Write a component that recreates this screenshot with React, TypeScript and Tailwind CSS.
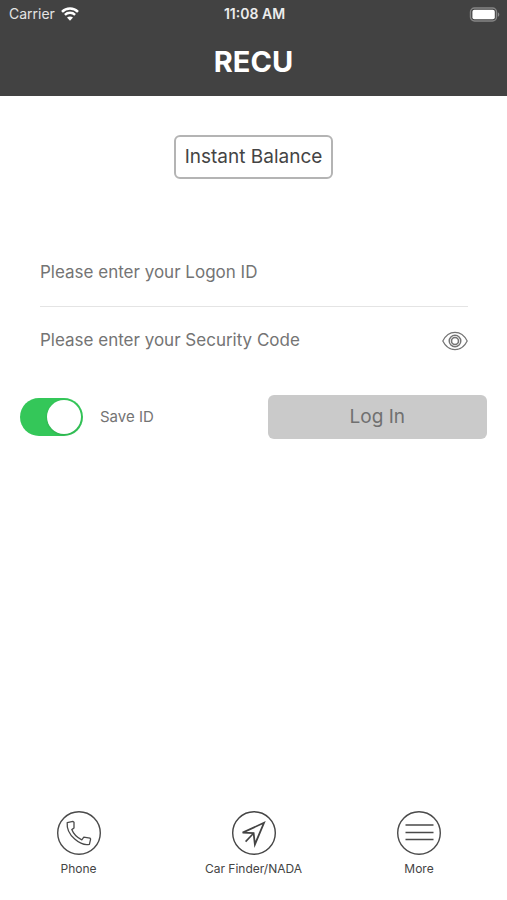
import { useState } from 'react';
import type { ReactNode } from 'react';

function WifiIcon() {
  return (
    <svg viewBox="0 0 18 14" className="h-3.5 w-[18px]" fill="none" stroke="white">
      <path d="M1 4.8C5.4.4 12.6.4 17 4.8" strokeWidth="2.5" />
      <path d="M3.9 7.9c2.8-2.8 7.4-2.8 10.2 0" strokeWidth="2.4" />
      <path d="M9 13.8 6 10.6c1.7-1.6 4.3-1.6 6 0Z" fill="white" stroke="none" />
    </svg>
  );
}

function BatteryIcon() {
  return (
    <svg viewBox="0 0 31 15" className="h-[15px] w-[31px]" fill="none">
      <rect x="1.5" y="1" width="26" height="13" rx="4" stroke="#858585" strokeWidth="1.4" />
      <rect x="3.4" y="2.8" width="22.4" height="9.4" rx="2" fill="white" />
      <path d="M28.9 5.2c1.9.8 1.9 3.8 0 4.6Z" fill="#8b8b8b" />
    </svg>
  );
}

function EyeIcon() {
  return (
    <svg viewBox="0 0 26 20" className="h-5 w-[26px]" fill="none" stroke="#747474">
      <path d="M.8 10C6.6-1.5 19.4-1.5 25.2 10 19.4 21.5 6.6 21.5.8 10Z" strokeWidth="1.2" />
      <circle cx="13" cy="10" r="5.8" strokeWidth="1.4" />
      <circle cx="13" cy="10" r="3.5" strokeWidth="1.6" />
    </svg>
  );
}

function PhoneIcon() {
  return (
    <svg viewBox="0 0 44 44" className="size-11" fill="none" stroke="#4a4a4a">
      <circle cx="22" cy="22" r="21.3" strokeWidth="1.4" />
      <path
        d="M10.2 11.6 16 10.4 17 11.2V17L14.8 18.6C16.4 22.8 20.2 26.8 24.8 28.8L26.8 26.2 33 27.2 33.6 28.2 32.4 33.4C24 35.4 9 24.5 10.2 11.6Z"
        strokeWidth="1.3"
        strokeLinejoin="round"
      />
    </svg>
  );
}

function FinderIcon() {
  return (
    <svg viewBox="0 0 44 44" className="size-11" fill="none" stroke="#444">
      <circle cx="22" cy="22" r="21.3" strokeWidth="1.4" />
      <path d="M32 11.8 10.6 21.6 21.6 22.2 22.9 33.4Z" strokeWidth="1.8" />
      <path d="M21.6 22.2 13.6 30.6" strokeWidth="1.6" />
    </svg>
  );
}

function MoreIcon() {
  return (
    <svg viewBox="0 0 44 44" className="size-11" fill="none" stroke="#4a4a4a">
      <circle cx="22" cy="22" r="21.3" strokeWidth="1.4" />
      <path d="M8.5 14h28M8.5 21.5h28M8.5 28.5h28" strokeWidth="1.7" />
    </svg>
  );
}

function NavItem({ label, icon }: { label: string; icon: ReactNode }) {
  return (
    <button type="button" className="flex flex-col items-center gap-1.5">
      {icon}
      <span className="text-xs leading-4">{label}</span>
    </button>
  );
}

export default function App() {
  const [saveId, setSaveId] = useState(true);
  const [showCode, setShowCode] = useState(false);

  return (
    <div className="flex min-h-screen flex-col bg-white font-['Inter',sans-serif] text-[#444]">
      <header className="bg-[#424242] pb-3.5 text-white">
        <div className="grid grid-cols-3 items-center pl-[9px] pr-[7px] pt-1 text-sm">
          <div className="flex items-center gap-1.5 text-[#e4e4e4]">
            <span>Carrier</span>
            <WifiIcon />
          </div>
          <span className="whitespace-nowrap text-center font-semibold text-[#ececec]">11:08 AM</span>
          <div className="flex justify-end">
            <BatteryIcon />
          </div>
        </div>
        <h1 className="pt-[18px] text-center text-[29px] font-bold leading-10">RECU</h1>
      </header>

      <main className="pt-[39px]">
        <div className="flex justify-center">
          <button
            type="button"
            className="h-11 rounded-md border-2 border-[#b4b4b4] px-[9px] text-[19px] text-[#444]"
          >
            Instant Balance
          </button>
        </div>

        <form onSubmit={event => event.preventDefault()}>
          <div className="ml-10 mr-[39px] mt-[59px]">
            <input
              type="text"
              aria-label="Logon ID"
              placeholder="Please enter your Logon ID"
              className="h-[69px] w-full border-b border-[#e4e4e4] text-[17px] outline-none placeholder:text-[#747474]"
            />
            <div className="flex h-[68px] items-center">
              <input
                type={showCode ? 'text' : 'password'}
                aria-label="Security Code"
                placeholder="Please enter your Security Code"
                className="min-w-0 flex-1 text-[17px] outline-none placeholder:text-[#747474]"
              />
              <button type="button" aria-label="Show code" onClick={() => setShowCode(!showCode)}>
                <EyeIcon />
              </button>
            </div>
          </div>

          <div className="mx-5 mt-5 flex items-center justify-between">
            <label className="flex items-center gap-[17px] text-[15px] text-[#747474]">
              <input
                type="checkbox"
                role="switch"
                checked={saveId}
                onChange={event => setSaveId(event.target.checked)}
                className="flex h-[38px] w-[63px] appearance-none items-center rounded-full bg-gray-300 p-0.5 before:size-[34px] before:rounded-full before:bg-white before:shadow checked:justify-end checked:bg-[#34c759]"
              />
              Save ID
            </label>
            <button
              type="submit"
              disabled
              className="h-11 w-[47%] rounded-md bg-[#cacaca] text-[19px] text-[#707070]"
            >
              Log In
            </button>
          </div>
        </form>
      </main>

      <nav className="mt-auto grid grid-cols-[157fr_193fr_138fr] pb-[23px] pr-[19px]">
        <NavItem label="Phone" icon={<PhoneIcon />} />
        <NavItem label="Car Finder/NADA" icon={<FinderIcon />} />
        <NavItem label="More" icon={<MoreIcon />} />
      </nav>
    </div>
  );
}
